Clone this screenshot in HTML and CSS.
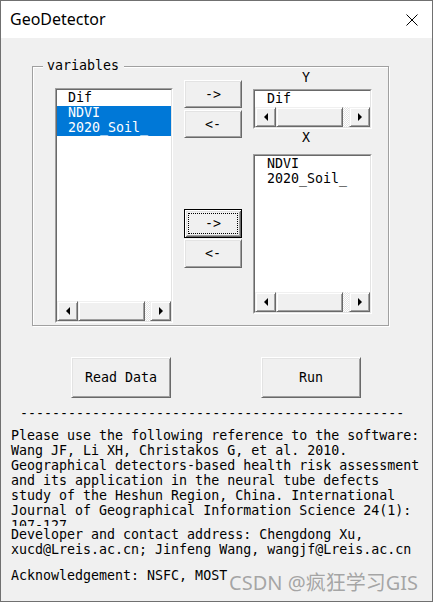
FILE: index.html
```html
<!DOCTYPE html>
<html>
<head>
<meta charset="utf-8">
<link rel="stylesheet" href="styles.css">
</head>
<body>
<div class="window">
  <div class="titlebar">
    <span class="title">GeoDetector</span>
    <svg class="close" width="12" height="12" viewBox="0 0 12 12"><path d="M0.5 0.5L11.5 11.5M11.5 0.5L0.5 11.5" stroke="#000" stroke-width="1" fill="none"/></svg>
  </div>
  <div class="client">
    <div class="group">
      <span class="legend">variables</span>
      <div class="listbox lb-main">
        <div class="lb-inner">
          <div class="items">
            <div class="item">Dif</div>
            <div class="item sel">NDVI</div>
            <div class="item sel">2020_Soil_</div>
          </div>
          <div class="hscroll">
            <div class="sb-btn"><span class="tri-left"></span></div>
            <div class="thumb"></div>
            <div class="track"></div>
            <div class="sb-btn"><span class="tri-right"></span></div>
          </div>
        </div>
      </div>
      <div class="midcol">
        <div class="btn b1">-&gt;</div>
        <div class="btn b2">&lt;-</div>
        <div class="btn b3 focused"><span class="focus-rect">-&gt;</span></div>
        <div class="btn b4">&lt;-</div>
      </div>
      <div class="rightcol">
        <div class="caption">Y</div>
        <div class="listbox lb-y">
          <div class="lb-inner">
            <div class="items">
              <div class="item r">Dif</div>
            </div>
            <div class="hscroll">
              <div class="sb-btn"><span class="tri-left"></span></div>
              <div class="thumb"></div>
              <div class="track"></div>
              <div class="sb-btn"><span class="tri-right"></span></div>
            </div>
          </div>
        </div>
        <div class="caption cap-x">X</div>
        <div class="listbox lb-x">
          <div class="lb-inner">
            <div class="items">
              <div class="item r">NDVI</div>
              <div class="item r">2020_Soil_</div>
            </div>
            <div class="hscroll">
              <div class="sb-btn"><span class="tri-left"></span></div>
              <div class="thumb"></div>
              <div class="track"></div>
              <div class="sb-btn"><span class="tri-right"></span></div>
            </div>
          </div>
        </div>
      </div>
    </div>
    <div class="actions">
      <div class="btn btn-big">Read Data</div>
      <div class="btn btn-big run">Run</div>
    </div>
    <div class="sep">------------------------------------------------</div>
    <div class="ref">Please use the following reference to the software:<br>Wang JF, Li XH, Christakos G, et al. 2010.<br>Geographical detectors-based health risk assessment<br>and its application in the neural tube defects<br>study of the Heshun Region, China. International<br>Journal of Geographical Information Science 24(1):<br>107-127</div>
    <div class="contact">Developer and contact address: Chengdong Xu,<br>xucd@Lreis.ac.cn; Jinfeng Wang, wangjf@Lreis.ac.cn</div>
    <div class="ack">Acknowledgement: NSFC, MOST</div>
  </div>
  <div class="watermark">CSDN @疯狂学习GIS</div>
</div>
</body>
</html>
```

FILE: styles.css
```css
* { box-sizing: border-box; }
html, body { margin: 0; padding: 0; }
body { width: 433px; height: 602px; overflow: hidden; background: #f0f0f0; }

.window {
  position: relative;
  width: 433px;
  height: 602px;
  border: 1px solid #707070;
  background: #f0f0f0;
  display: flex;
  flex-direction: column;
}

.titlebar {
  flex: none;
  height: 37px;
  background: #fff;
  display: flex;
  align-items: center;
  justify-content: space-between;
  padding: 0 14px 0 9px;
}
.title {
  font-family: "Noto Sans", sans-serif;
  font-size: 16px;
  line-height: 37px;
  color: #000;
}
.close { display: block; width: 12px; height: 12px; }

.client {
  flex: 1;
  font-family: "DejaVu Sans Mono", monospace;
  font-size: 13.3px;
  line-height: 15px;
  color: #000;
}

.group {
  position: relative;
  margin: 28px 0 0 31px;
  width: 357px;
  height: 260px;
  border: 1px solid #a0a0a0;
  box-shadow: inset 1px 1px #fff, 1px 1px #fff;
  display: flex;
  align-items: flex-start;
}
.legend {
  position: absolute;
  left: 10px;
  top: -9px;
  padding: 0 5px 0 4px;
  background: #f0f0f0;
  line-height: 15px;
  white-space: pre;
}

.listbox {
  flex: none;
  background: #fff;
  border: 1px solid;
  border-color: #a0a0a0 #fff #fff #a0a0a0;
}
.lb-inner {
  height: 100%;
  border: 1px solid;
  border-color: #696969 #e3e3e3 #e3e3e3 #696969;
  display: flex;
  flex-direction: column;
}
.items { flex: 1; padding-top: 1px; overflow: hidden; }
.item { height: 15px; line-height: 14px; padding-left: 11px; white-space: pre; }
.item.r { padding-left: 12px; }
.item.sel { background: #0078d7; color: #fff; }

.lb-main { width: 118px; height: 235px; margin: 21px 0 0 22px; }
.lb-y { width: 119px; height: 40px; margin-top: 4px; }
.lb-x { width: 119px; height: 160px; margin-top: 9px; }

.hscroll { flex: none; height: 20px; display: flex; }
.sb-btn, .thumb {
  background: #f0f0f0;
  border: 1px solid;
  border-color: #f0f0f0 #696969 #696969 #f0f0f0;
  box-shadow: inset 1px 1px #fff, inset -1px -1px #a0a0a0;
}
.sb-btn { width: 21px; display: flex; align-items: center; justify-content: center; }
.thumb { width: 67px; }
.track {
  flex: 1;
  background: repeating-conic-gradient(#fff 0 25%, #e4e4e4 0 50%) 0 0 / 2px 2px;
}
.tri-left, .tri-right {
  width: 0; height: 0;
  border-top: 4px solid transparent;
  border-bottom: 4px solid transparent;
}
.tri-left { border-right: 4px solid #000; }
.tri-right { border-left: 4px solid #000; }

.midcol {
  flex: none;
  width: 58px;
  margin: 13px 0 0 11px;
  display: flex;
  flex-direction: column;
}
.btn {
  background: #f0f0f0;
  border: 1px solid;
  border-color: #fff #696969 #696969 #fff;
  box-shadow: inset 1px 1px #e3e3e3, inset -1px -1px #a0a0a0;
  display: flex;
  align-items: center;
  justify-content: center;
  white-space: pre;
}
.b1 { height: 28px; }
.b2 { height: 28px; margin-top: 2px; }
.b3 { height: 29px; margin-top: 71px; }
.b4 { height: 29px; margin-top: 1px; }
.btn.focused {
  border-color: #000;
  box-shadow: inset 1px 1px #fff, inset -1px -1px #696969, inset 2px 2px #e3e3e3, inset -2px -2px #a0a0a0;
  padding: 3px;
  align-items: stretch;
}
.focus-rect {
  flex: 1;
  border: 1px dotted #000;
  display: flex;
  align-items: center;
  justify-content: center;
}

.rightcol {
  flex: none;
  width: 119px;
  margin: 3px 0 0 11px;
  display: flex;
  flex-direction: column;
}
.caption { height: 15px; padding-left: 49px; }
.cap-x { margin-top: 1px; }

.actions { display: flex; margin: 31px 0 0 70px; }
.btn-big { width: 100px; height: 41px; }
.btn-big.run { margin-left: 90px; }

.sep { margin-top: 8px; padding-left: 19px; white-space: pre; }
.ref { margin-top: 7px; height: 98px; overflow: hidden; padding-left: 10px; white-space: nowrap; }
.contact { margin-top: 1px; padding-left: 10px; white-space: nowrap; }
.ack { margin-top: 11px; padding-left: 10px; white-space: nowrap; }

.watermark {
  position: absolute;
  right: 14px;
  bottom: 6px;
  font-family: "Noto Sans", "Noto Sans CJK SC", sans-serif;
  font-size: 20px;
  line-height: 24px;
  color: rgba(140, 140, 140, 0.75);
  white-space: nowrap;
}
```
